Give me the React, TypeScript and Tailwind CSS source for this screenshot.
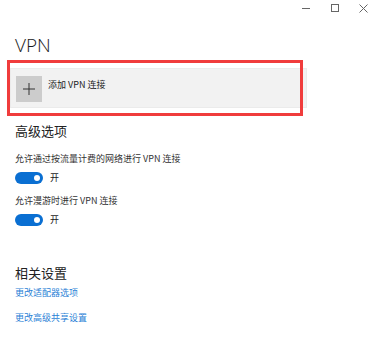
export default function App() {
  const cjk = "font-['Noto_Sans_CJK_SC','Noto_Sans',sans-serif]";
  return (
    <div className={`relative w-[382px] h-[338px] overflow-hidden bg-white text-[#1a1a1a] ${cjk}`}>
      {/* Title bar */}
      <div className="h-[16px] flex justify-end items-center pr-[5px]">
        <div className="w-[30px] flex justify-center">
          <div className="w-[8px] h-px bg-[#666]" />
        </div>
        <div className="w-[28px] flex justify-center">
          <div className="w-[8px] h-[8px] border border-[#666]" />
        </div>
        <div className="w-[28px] flex justify-center">
          <svg width="9" height="9" viewBox="0 0 9 9" className="text-[#666]">
            <path d="M0.5 0.5 L8.5 8.5 M8.5 0.5 L0.5 8.5" stroke="currentColor" strokeWidth="1" />
          </svg>
        </div>
      </div>

      <div className="flex flex-col pl-[15px]">
        <div className="mt-[17px] h-[24px] text-[19px] leading-[24px] font-light font-['Open_Sans','Noto_Sans',sans-serif]">
          VPN
        </div>

        {/* Add VPN connection */}
        <div className="mt-[11px] -ml-[5px] w-[297px] h-[40px] bg-[#f2f2f2] border border-[#ebebeb] flex items-start pt-[7px] pl-[5px] gap-[6px]">
          <div className="w-[26px] h-[26px] bg-[#cccccc] flex items-center justify-center">
            <svg width="12" height="12" viewBox="0 0 12 12">
              <path d="M6 0 V12 M0 6 H12" stroke="#333" strokeWidth="1" />
            </svg>
          </div>
          <div className="text-[9px] leading-[14px] mt-[2px] text-[#222]">添加 VPN 连接</div>
        </div>

        {/* Advanced options */}
        <div className="mt-[13px] text-[13px] leading-[20px] text-[#222]">高级选项</div>
        <div className="mt-[11px] text-[9px] leading-[14px] text-[#333]">允许通过按流量计费的网络进行 VPN 连接</div>
        <div className="mt-[6px] flex items-center gap-[7px]">
          <div className="w-[28px] h-[12px] rounded-full bg-[#0a6fd2] flex items-center justify-end pr-[3px]">
            <div className="w-[6px] h-[6px] rounded-full bg-white" />
          </div>
          <span className="text-[9px] leading-[12px]">开</span>
        </div>
        <div className="mt-[10px] text-[9px] leading-[14px] text-[#333]">允许漫游时进行 VPN 连接</div>
        <div className="mt-[6px] flex items-center gap-[7px]">
          <div className="w-[28px] h-[12px] rounded-full bg-[#0a6fd2] flex items-center justify-end pr-[3px]">
            <div className="w-[6px] h-[6px] rounded-full bg-white" />
          </div>
          <span className="text-[9px] leading-[12px]">开</span>
        </div>

        {/* Related settings */}
        <div className="mt-[37px] text-[13px] leading-[20px] text-[#222]">相关设置</div>
        <div className="mt-[3px] text-[9px] leading-[14px] text-[#2a7fd6]">更改适配器选项</div>
        <div className="mt-[11px] text-[9px] leading-[14px] text-[#2a7fd6]">更改高级共享设置</div>
      </div>

      {/* Red highlight annotation */}
      <div className="absolute left-[7px] top-[60px] w-[296px] h-[56px] border-[3px] border-[#f03c3c]" />
    </div>
  );
}
